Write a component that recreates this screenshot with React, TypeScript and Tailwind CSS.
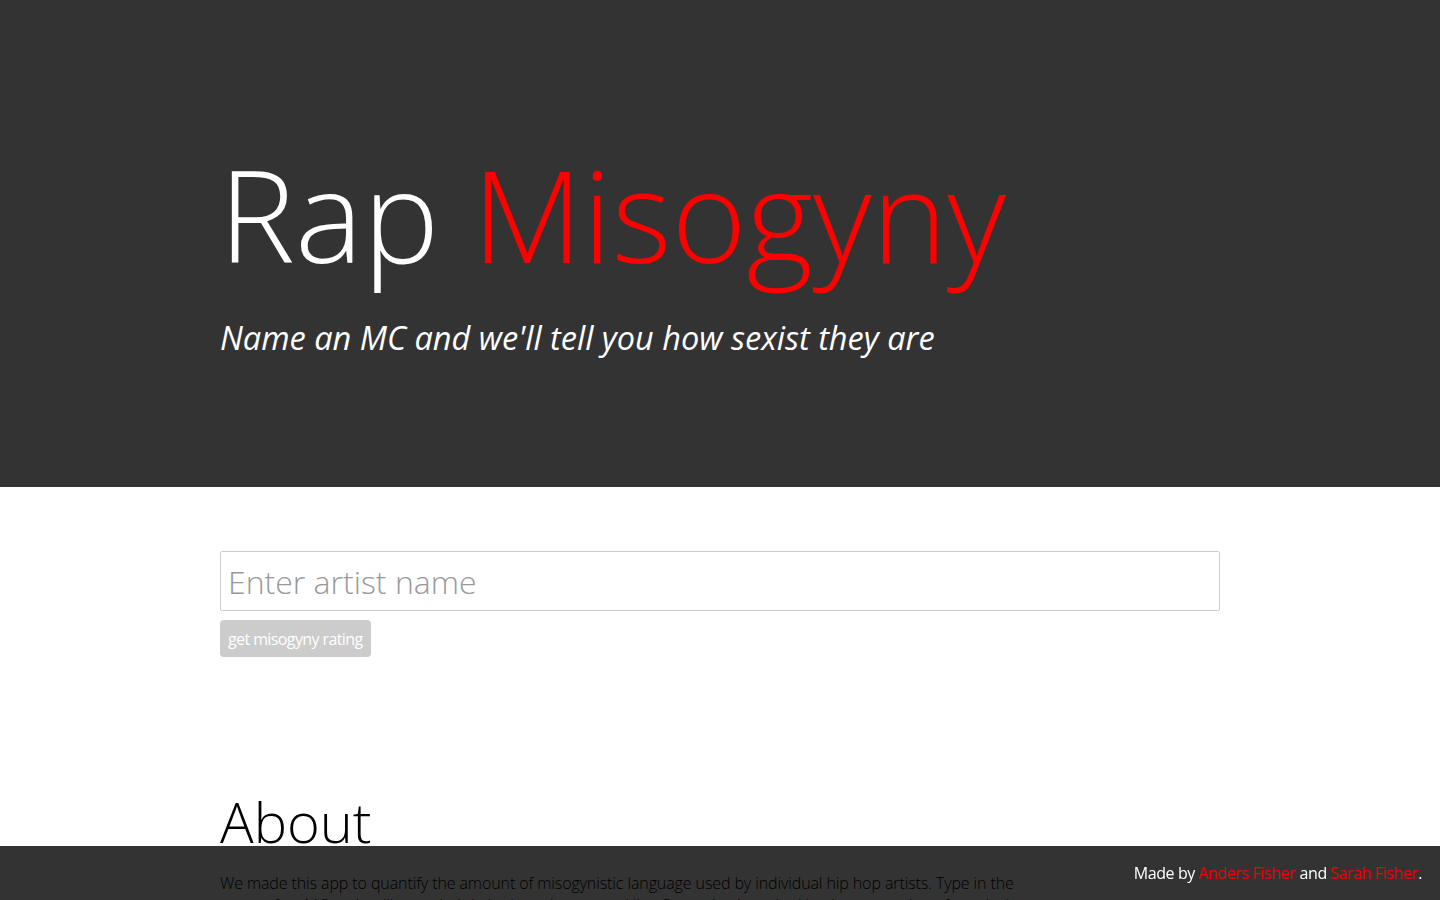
import React from "react";

const font = { fontFamily: '"Open Sans", "Liberation Sans", sans-serif' };

const App = () => {
    return (
        <div className="min-h-screen bg-white text-black" style={font}>
            {/* Hero */}
            <header className="bg-[#333] h-[487px]">
                <div className="mx-auto w-[1000px] pt-[144px]">
                    <h1 className="text-[128px] leading-[1.1] font-light text-white -ml-[1px]">
                        Rap <span className="text-[#ff0000]">Misogyny</span>
                    </h1>
                    <p className="mt-[29px] text-[32.5px] italic text-white">
                        Name an MC and we'll tell you how sexist they are
                    </p>
                </div>
            </header>

            {/* Search */}
            <main className="mx-auto w-[1000px] pt-[64px] pb-[200px]">
                <input
                    type="text"
                    placeholder="Enter artist name"
                    className="block w-full h-[60px] border border-[#ccc] rounded-[2px] px-[7px] text-[32px] font-light placeholder:text-[#999] outline-none"
                />
                <button className="mt-[9px] h-[37px] px-[8px] rounded-[4px] bg-[#ccc] text-white text-[16px] tracking-[-0.6px]">
                    get misogyny rating
                </button>

                <section className="mt-[134px]">
                    <h2 className="text-[56px] leading-[1.1] font-light">About</h2>
                    <p className="mt-[19px] w-[810px] text-[16px] leading-[22px] font-light tracking-[-0.1px]">
                        We made this app to quantify the amount of misogynistic language used by individual hip hop artists. Type in the
                        name of an MC and we'll scan their lyrics based on a word list. Our rating is ranked by the proportion of
                        words that are misogynistic compared to the total number of words in their songs.
                    </p>
                </section>
            </main>

            {/* Footer */}
            <footer className="fixed bottom-0 left-0 right-0 h-[54px] bg-black/80 flex items-center justify-end pr-[18px] text-[16px] text-white tracking-[-0.4px]">
                <span>
                    Made by <a href="#" className="text-[#ff0000]">Anders Fisher</a> and{" "}
                    <a href="#" className="text-[#ff0000]">Sarah Fisher</a>.
                </span>
            </footer>
        </div>
    );
};

export default App;
